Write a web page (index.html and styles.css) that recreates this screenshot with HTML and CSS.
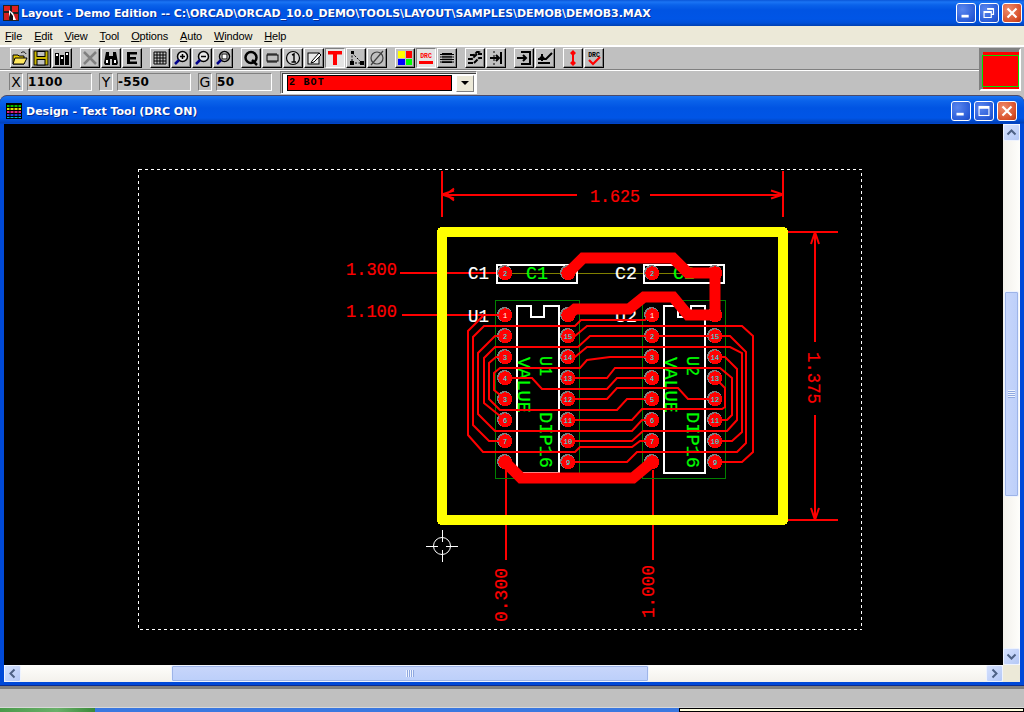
FILE: index.html
```html
<!DOCTYPE html>
<html lang="en">
<head>
<meta charset="utf-8">
<title>Layout - Demo Edition</title>
<link rel="stylesheet" href="styles.css">
</head>
<body>
<div class="app">
  <header class="titlebar">
    <svg class="app-icon" viewBox="0 0 16 16"><rect width="16" height="16" fill="#222"/><path d="M1 1h6v5H1zM9 1h6v6H9z" fill="#e02020"/><path d="M1 8h5v7H1zM11 9h4v6h-4z" fill="#d02020"/><path d="M6 5l4 3 3 7H8L6 9z" fill="#fff"/><path d="M7 7l3 4v4H7z" fill="#111"/></svg>
    <span class="title-text">Layout - Demo Edition -- C:\ORCAD\ORCAD_10.0_DEMO\TOOLS\LAYOUT\SAMPLES\DEMOB\DEMOB3.MAX</span>
    <div class="win-btns">
      <button class="win-btn"><svg viewBox="0 0 20 20"><rect x="5" y="12" width="8" height="3" fill="#fff"/></svg></button>
      <button class="win-btn"><svg viewBox="0 0 20 20"><path d="M8 5.500h7v6h-2.500M4.500 8.500h8v6.500h-8z" fill="none" stroke="#fff" stroke-width="1.300"/><path d="M8 4.500h7v2H8zM4.500 8h8v2h-8z" fill="#fff"/></svg></button>
      <button class="win-btn close"><svg viewBox="0 0 20 20"><path d="M5 5l10 10M15 5L5 15" stroke="#fff" stroke-width="2.400"/></svg></button>
    </div>
  </header>
  <nav class="menubar">
    <span><u>F</u>ile</span><span><u>E</u>dit</span><span><u>V</u>iew</span><span><u>T</u>ool</span><span><u>O</u>ptions</span><span><u>A</u>uto</span><span><u>W</u>indow</span><span><u>H</u>elp</span>
  </nav>
  <section class="tools">
    <div class="tool-rows">
      <div class="toolbar">
        <div class="tgroup">
          <button class="tb"><svg viewBox="0 0 16 16"><path d="M1 5h5l1 1h5v8H1z" fill="#e8c800" stroke="#000"/><path d="M3 8h12l-3 6H1z" fill="#ffe860" stroke="#000"/><path d="M9 3c2-2 4-1 5 1" fill="none" stroke="#000"/></svg></button>
          <button class="tb"><svg viewBox="0 0 16 16"><rect x="1" y="1" width="14" height="14" fill="#c8b400" stroke="#000"/><rect x="4" y="1.500" width="8" height="5" fill="#c0c0c0" stroke="#000"/><rect x="4" y="9.500" width="8" height="5.500" fill="#c0c0c0" stroke="#000"/></svg></button>
          <button class="tb"><svg viewBox="0 0 16 16"><path d="M1 3h4v12H1zM6 5h4v10H6zM11 2h4v13h-4z" fill="#000"/><path d="M2 4h2v2H2zM7 7h2v2H7zM12 3h2v2h-2z" fill="#fff"/></svg></button>
        </div>
        <div class="tgroup">
          <button class="tb"><svg viewBox="0 0 16 16"><path d="M2 2l12 12M14 2L2 14" stroke="#808080" stroke-width="2.500"/></svg></button>
          <button class="tb"><svg viewBox="0 0 16 16"><path d="M3 2h3v4h4V2h3l2 11-1 2H9V9H7v6H2l-1-2z" fill="#000"/><path d="M3 10h2v3H3zM11 10h2v3h-2z" fill="#fff"/></svg></button>
          <button class="tb"><svg viewBox="0 0 16 16"><path d="M3 2h10v2.500H6v2.500h6v2.500H6v2h7V14H3z" fill="#000"/></svg></button>
        </div>
        <div class="tgroup">
          <button class="tb"><svg viewBox="0 0 16 16"><path d="M2 2h12v12H2zM2 5h12M2 8h12M2 11h12M5 2v12M8 2v12M11 2v12" fill="none" stroke="#000"/></svg></button>
          <button class="tb"><svg viewBox="0 0 16 16"><circle cx="9.500" cy="6.500" r="5" fill="#e8e8e8" stroke="#000" stroke-width="1.500"/><path d="M6 10l-4 4" stroke="#00008b" stroke-width="2.500"/><path d="M7 6.500h5M9.500 4v5" stroke="#000" stroke-width="1.500"/></svg></button>
          <button class="tb"><svg viewBox="0 0 16 16"><circle cx="9.500" cy="6.500" r="5" fill="#e8e8e8" stroke="#000" stroke-width="1.500"/><path d="M6 10l-4 4" stroke="#00008b" stroke-width="2.500"/><path d="M7 6.500h5" stroke="#000" stroke-width="1.500"/></svg></button>
          <button class="tb"><svg viewBox="0 0 16 16"><circle cx="9.500" cy="6.500" r="5" fill="#e8e8e8" stroke="#000" stroke-width="1.500"/><path d="M6 10l-4 4" stroke="#00008b" stroke-width="2.500"/><rect x="7" y="4" width="5" height="5" fill="#fff" stroke="#000"/></svg></button>
        </div>
        <div class="tgroup">
          <button class="tb"><svg viewBox="0 0 16 16"><circle cx="8" cy="7.500" r="5.500" fill="none" stroke="#000" stroke-width="2.500"/><path d="M9 10l5 5" stroke="#000" stroke-width="2.500"/></svg></button>
          <button class="tb"><svg viewBox="0 0 16 16"><rect x="3" y="5" width="11" height="6" fill="#c0c0c0" stroke="#000"/><path d="M4 3v2M6 3v2M8 3v2M10 3v2M12 3v2M4 11v2M6 11v2M8 11v2M10 11v2M12 11v2" stroke="#000"/></svg></button>
          <button class="tb"><svg viewBox="0 0 16 16"><circle cx="8" cy="8" r="6.500" fill="#d8d8d8" stroke="#000" stroke-width="1.200"/><path d="M7 5l2-1v8M6.500 12h4.500" fill="none" stroke="#000" stroke-width="1.400"/></svg></button>
          <button class="tb"><svg viewBox="0 0 16 16"><rect x="2" y="3" width="11" height="11" fill="#e8e8e8" stroke="#000"/><path d="M6 11l7-8 2 2-7 7-3 1z" fill="#fff" stroke="#000"/></svg></button>
          <button class="tb on"><svg viewBox="0 0 16 16"><path d="M1 1h14v3.500H10V15H6V4.500H1z" fill="#ff0000"/></svg></button>
          <button class="tb"><svg viewBox="0 0 16 16"><path d="M4 2v11h10" fill="none" stroke="#000" stroke-dasharray="2 1.500"/><path d="M4 3l10 10" stroke="#000" stroke-dasharray="2 1.500"/><path d="M2 11h4v4H2zM12 11h4v4h-4zM3 1h3v3H3z" fill="#000"/></svg></button>
          <button class="tb"><svg viewBox="0 0 16 16"><circle cx="8" cy="8" r="6" fill="none" stroke="#404040" stroke-width="1.200"/><path d="M2 15L14 1" stroke="#404040" stroke-width="1.200"/></svg></button>
        </div>
        <div class="tgroup">
          <button class="tb"><svg viewBox="0 0 16 16"><path d="M1 1h7v7H1z" fill="#ffff00"/><path d="M9 1h6v7H9z" fill="#ff0000"/><path d="M1 9h7v6H1z" fill="#0000ff"/><path d="M9 9h6v6H9z" fill="#00ff00"/></svg></button>
          <button class="tb on"><svg viewBox="0 0 16 16"><text x="8" y="7.500" class="drc-mini">DRC</text><rect x="1" y="11" width="14" height="3" fill="#ff0000"/></svg></button>
          <button class="tb"><svg viewBox="0 0 16 16"><rect x="3" y="3" width="10" height="10" fill="#000"/><path d="M1 4.500h14M1 7h14M1 9.500h14M1 12h14" stroke="#000"/><path d="M2 5.700h12M2 8.200h12M2 10.700h12" stroke="#c0c0c0"/></svg></button>
        </div>
        <div class="tgroup">
          <button class="tb"><svg viewBox="0 0 16 16"><path d="M1 9h4l5-5h5M1 13h6l5-5h3M3 5h4l3-3h4" fill="none" stroke="#000" stroke-width="2" stroke-dasharray="5 1"/></svg></button>
          <button class="tb"><svg viewBox="0 0 16 16"><path d="M2 8h9M8 5l3 3-3 3M13 2v12" fill="none" stroke="#000" stroke-width="2"/><path d="M6 1v14" stroke="#000" stroke-dasharray="2 2"/></svg></button>
        </div>
        <div class="tgroup">
          <button class="tb"><svg viewBox="0 0 16 16"><path d="M1 8h9M7 5l3 3-3 3M5 2h9v12H5" fill="none" stroke="#000" stroke-width="2"/></svg></button>
          <button class="tb"><svg viewBox="0 0 16 16"><path d="M1 9h8l6-6M1 13h12M5 4v7M3 7l2 2 2-2" fill="none" stroke="#000" stroke-width="2"/></svg></button>
        </div>
        <div class="tgroup">
          <button class="tb"><svg viewBox="0 0 16 16"><path d="M8 3v10" stroke="#ff0000" stroke-width="2"/><path d="M8 0l3 3-3 3-3-3zM8 10l3 3-3 3-3-3z" fill="#ff0000"/></svg></button>
          <button class="tb"><svg viewBox="0 0 16 16"><text x="8" y="6.500" class="drc-dark">DRC</text><path d="M3 10l4 4 7-7" fill="none" stroke="#ff0000" stroke-width="2.200"/></svg></button>
        </div>
      </div>
      <div class="coords">
        <span class="cell lab">X</span><span class="cell val w-x">1100</span>
        <span class="cell lab sep">Y</span><span class="cell val w-y">-550</span>
        <span class="cell lab sep">G</span><span class="cell val w-g">50</span>
        <div class="combo">
          <span class="combo-val">2 BOT</span>
          <span class="combo-btn"><i class="caret"></i></span>
        </div>
      </div>
    </div>
    <div class="swatch"><div class="swatch-in"></div></div>
  </section>
  <main class="child">
    <div class="child-title">
      <svg class="child-icon" viewBox="0 0 16 16"><rect width="16" height="16" fill="#000"/><path d="M1 2h14v2H1z" fill="#00c000"/><path d="M1 5h14v2H1z" fill="#e0e000"/><path d="M1 8h14v2H1z" fill="#e02080"/><path d="M1 11h14v2H1z" fill="#2040e0"/><path d="M1 14h14v1H1z" fill="#00c0c0"/><path d="M4 1v14M8 1v14M12 1v14" stroke="#000"/></svg>
      <span class="child-text">Design - Text Tool (DRC ON)</span>
      <div class="win-btns">
        <button class="win-btn"><svg viewBox="0 0 20 20"><rect x="5" y="12" width="8" height="3" fill="#fff"/></svg></button>
        <button class="win-btn"><svg viewBox="0 0 20 20"><rect x="4.500" y="5" width="11" height="10" fill="none" stroke="#fff" stroke-width="1.200"/><rect x="4.500" y="5" width="11" height="2.500" fill="#fff"/></svg></button>
        <button class="win-btn close"><svg viewBox="0 0 20 20"><path d="M5 5l10 10M15 5L5 15" stroke="#fff" stroke-width="2.400"/></svg></button>
      </div>
    </div>
    <div class="child-body">
      <div class="view-row">
        <svg class="canvas" viewBox="4 124 999 541" shape-rendering="crispEdges">
          <defs>
            <g id="pad"><circle cx="-0.400" cy="-0.400" r="7.500" class="pad-edge"/><circle cx="0.300" cy="0.300" r="7" class="pad-fill"/></g>
          </defs>
          <rect x="138.500" y="169.500" width="723" height="460" class="outline"/>

          <g class="ref">
            <path d="M442 171v46M783 171v46M442 194.500h135M650 194.500h133M788 232h50M788 520h50M815 232v110M815 415v105M400 273h105M402 315h103M505.500 470v90M652.500 470v90"/>
            <path d="M442 194.500l12-4M442 194.500l12 4M446 194.500l8-6M446 194.500l8 6M783 194.500l-12-4M783 194.500l-12 4M815 232l-4 12M815 232l4 12M815 520l-4-12M815 520l4-12" shape-rendering="auto"/>
          </g>
          <text class="ref-t" x="590" y="202" textLength="50" lengthAdjust="spacingAndGlyphs">1.625</text>
          <text class="ref-t" x="346" y="275" textLength="51" lengthAdjust="spacingAndGlyphs">1.300</text>
          <text class="ref-t" x="346" y="317" textLength="51" lengthAdjust="spacingAndGlyphs">1.100</text>
          <text class="ref-t" transform="translate(808 352) rotate(90)" textLength="52" lengthAdjust="spacingAndGlyphs">1.375</text>
          <text class="ref-t" transform="translate(507 622) rotate(-90)" textLength="54" lengthAdjust="spacingAndGlyphs">0.300</text>
          <text class="ref-t" transform="translate(654 618) rotate(-90)" textLength="53" lengthAdjust="spacingAndGlyphs">1.000</text>

          <rect x="442" y="232" width="341" height="288" class="frame"/>

          <path class="olive" d="M505 273.500h210"/>
          <path class="court" d="M495.500 300.500h84v178h-84zM642.500 300.500h83v178h-83z"/>
          <path class="silk" d="M496.500 264.500h80v18h-80zM643.500 264.500h80v18h-80zM516.500 305.500h14v11h13v-11h15v167h-42zM663.500 305.500h14v11h13v-11h14v167h-41z"/>

          <text class="w-t" x="468" y="279" textLength="21" lengthAdjust="spacingAndGlyphs">C1</text>
          <text class="w-t" x="615" y="279" textLength="22" lengthAdjust="spacingAndGlyphs">C2</text>
          <text class="w-t" x="468" y="322" textLength="21" lengthAdjust="spacingAndGlyphs">U1</text>
          <text class="w-t" x="615" y="322" textLength="22" lengthAdjust="spacingAndGlyphs">U2</text>
          <text class="g-t" x="526" y="279" textLength="22" lengthAdjust="spacingAndGlyphs">C1</text>
          <text class="g-t" x="673" y="279" textLength="22" lengthAdjust="spacingAndGlyphs">C2</text>
          <text class="g-t" transform="translate(540 356) rotate(90)" textLength="20" lengthAdjust="spacingAndGlyphs">U1</text>
          <text class="g-t" transform="translate(518 357) rotate(90)" textLength="56" lengthAdjust="spacingAndGlyphs">VALUE</text>
          <text class="g-t" transform="translate(540 412) rotate(90)" textLength="56" lengthAdjust="spacingAndGlyphs">DIP16</text>
          <text class="g-t" transform="translate(687 356) rotate(90)" textLength="20" lengthAdjust="spacingAndGlyphs">U2</text>
          <text class="g-t" transform="translate(665 357) rotate(90)" textLength="56" lengthAdjust="spacingAndGlyphs">VALUE</text>
          <text class="g-t" transform="translate(687 412) rotate(90)" textLength="56" lengthAdjust="spacingAndGlyphs">DIP16</text>

          <g>
            <use href="#pad" x="505" y="273"/><use href="#pad" x="568" y="273"/><use href="#pad" x="652" y="273"/><use href="#pad" x="715" y="273"/>
            <use href="#pad" x="505" y="315"/><use href="#pad" x="505" y="336"/><use href="#pad" x="505" y="357"/><use href="#pad" x="505" y="378"/><use href="#pad" x="505" y="399"/><use href="#pad" x="505" y="420"/><use href="#pad" x="505" y="441"/><use href="#pad" x="505" y="462"/>
            <use href="#pad" x="568" y="315"/><use href="#pad" x="568" y="336"/><use href="#pad" x="568" y="357"/><use href="#pad" x="568" y="378"/><use href="#pad" x="568" y="399"/><use href="#pad" x="568" y="420"/><use href="#pad" x="568" y="441"/><use href="#pad" x="568" y="462"/>
            <use href="#pad" x="652" y="315"/><use href="#pad" x="652" y="336"/><use href="#pad" x="652" y="357"/><use href="#pad" x="652" y="378"/><use href="#pad" x="652" y="399"/><use href="#pad" x="652" y="420"/><use href="#pad" x="652" y="441"/><use href="#pad" x="652" y="462"/>
            <use href="#pad" x="715" y="315"/><use href="#pad" x="715" y="336"/><use href="#pad" x="715" y="357"/><use href="#pad" x="715" y="378"/><use href="#pad" x="715" y="399"/><use href="#pad" x="715" y="420"/><use href="#pad" x="715" y="441"/><use href="#pad" x="715" y="462"/>
          </g>

          <g class="thin" shape-rendering="auto">
            <path d="M505 315h-21l-16 16v104l15 17h92l5-5h52l8-6h12"/>
            <path d="M652 315l-7 5h-64l-6 6h-91l-11 11v88l16 16h16"/>
            <path d="M568 336h7l12-10h155l11 10v116l-11 10h-27"/>
            <path d="M568 462h59l10-10h100l9-9v-91l-16-16H590l-12 11h-83l-11 11v45l21 17"/>
            <path d="M568 357h7l12-10h143l12 6v79l-10 9h-17"/>
            <path d="M715 357h10l12 12v51l-10 11H643l-11 10h-64"/>
            <path d="M715 420h12l5-5v-37l-12-10H615l-8 10h-39"/>
            <path d="M715 378l10 10v19l-3 2h-80l-10 11h-64"/>
            <path d="M715 399h-27l-10-11h-61l-10 11h-39"/>
            <path d="M652 399h-25l-10 11H500l-11-11v-36l7-6h9"/>
            <path d="M652 378h-35l-10 11h-65l-10-11h-27"/>
            <path d="M652 357h-42l-23 3-7 8H500l-6 5v17l11 9"/>
            <path d="M652 420h-10l-10 11H495l-17-17v-61l17-17h10"/>
          </g>
          <g class="thick" shape-rendering="auto">
            <path d="M568 273l15-15h90l15 15h27v42h-27l-15-18h-29l-15 12h-54l-7 6"/>
            <path d="M505 462l16 16h112l19-16"/>
          </g>

          <g class="pin-n">
            <text class="pin-w" x="505" y="318">1</text><text x="505" y="276">2</text><text x="505" y="339">2</text><text x="505" y="360">3</text><text x="505" y="381">4</text><text x="505" y="402">3</text><text x="505" y="423">6</text><text x="505" y="444">7</text>
            <text x="568" y="339">15</text><text x="568" y="360">14</text><text x="568" y="381">13</text><text x="568" y="402">12</text><text x="568" y="423">11</text><text x="568" y="444">10</text><text x="568" y="465">9</text>
            <text x="652" y="339">2</text><text x="652" y="360">3</text><text x="652" y="381">4</text><text x="652" y="402">5</text><text x="652" y="423">6</text><text x="652" y="444">7</text>
            <text x="715" y="339">15</text><text x="715" y="360">14</text><text x="715" y="381">13</text><text x="715" y="402">12</text><text x="715" y="423">11</text><text x="715" y="444">10</text><text x="715" y="465">9</text>
            <text class="pin-w" x="652" y="318">1</text><text x="652" y="276">2</text>
          </g>

          <g class="cross">
            <circle cx="442" cy="546" r="8.500" shape-rendering="auto"/>
            <path d="M442 530v12M442 550v12M426 546h12M446 546h12"/>
          </g>
        </svg>
        <div class="vscroll">
          <span class="sb-btn"><svg viewBox="0 0 15 15"><path d="M3.500 9.500l4-4 4 4" fill="none" stroke="#4d6185" stroke-width="2"/></svg></span>
          <div class="vtrack"><div class="vthumb"><i class="grip"></i></div></div>
          <span class="sb-btn"><svg viewBox="0 0 15 15"><path d="M3.500 5.500l4 4 4-4" fill="none" stroke="#4d6185" stroke-width="2"/></svg></span>
        </div>
      </div>
      <div class="hscroll">
        <span class="sb-btn"><svg viewBox="0 0 15 15"><path d="M9.500 3.500l-4 4 4 4" fill="none" stroke="#4d6185" stroke-width="2"/></svg></span>
        <div class="htrack"><div class="hthumb"><i class="grip-h"></i></div></div>
        <span class="sb-btn"><svg viewBox="0 0 15 15"><path d="M5.500 3.500l4 4-4 4" fill="none" stroke="#4d6185" stroke-width="2"/></svg></span>
        <span class="sizer"></span>
      </div>
    </div>
  </main>
  <div class="status"></div>
  <footer class="taskstrip"><span class="start"></span><span class="task"></span><span class="tip"></span></footer>
</div>
</body>
</html>
```

FILE: styles.css
```css
* { box-sizing: border-box; }
html, body { margin: 0; padding: 0; background: #c0c0c0; }
.app { width: 1024px; height: 712px; overflow: hidden; display: flex; flex-direction: column; font-family: "DejaVu Sans", sans-serif; }

.titlebar { height: 26px; flex: none; display: flex; align-items: center; padding: 0 2px 0 3px; background: linear-gradient(#0a56d8 0, #1a74f4 2px, #0a62ea 5px, #0054e3 10px, #0055e6 19px, #0050d8 23px, #0040b0 26px); }
.app-icon { width: 16px; height: 16px; flex: none; }
.title-text { margin-left: 2px; color: #fff; font-size: 11px; font-weight: bold; white-space: nowrap; text-shadow: 1px 1px 0 #0a2c90; flex: 1; letter-spacing: -0.05px; }
.win-btns { display: flex; gap: 3px; flex: none; }
.win-btn { width: 20px; height: 20px; padding: 0; border: 1px solid #fff; border-radius: 3px; background: radial-gradient(circle at 30% 30%, #5a86ee, #2a5cd8 70%, #1c48c0); display: block; }
.win-btn svg { width: 18px; height: 18px; display: block; }
.win-btn.close { background: radial-gradient(circle at 30% 30%, #ee8a6a, #d8502a 70%, #b83410); }

.menubar { height: 19px; flex: none; background: #ece9d8; display: flex; gap: 12px; padding-left: 5px; align-items: center; font: 11px "Liberation Sans", sans-serif; letter-spacing: -0.15px; color: #000; }

.tools { height: 50px; flex: none; background: #c0c0c0; border-top: 2px solid #fff; display: flex; }
.tool-rows { flex: 1; display: flex; flex-direction: column; }
.toolbar { height: 23px; padding: 1px 0 0 10px; display: flex; gap: 8px; border-bottom: 1px solid #808080; box-shadow: 0 1px 0 #fff; }
.tgroup { display: flex; gap: 1px; }
.tb { width: 20px; height: 20px; padding: 1px; background: #c0c0c0; border: 1px solid; border-color: #fff #000 #000 #fff; box-shadow: inset -1px -1px 0 #808080; display: block; }
.tb svg { width: 16px; height: 16px; display: block; }
.tb.on { background: #e4e4e4; border-color: #808080 #fff #fff #808080; box-shadow: none; }
.drc-mini { font: bold 6.500px "Liberation Mono", monospace; fill: #ff0000; text-anchor: middle; }
.drc-dark { font: bold 6.500px "Liberation Mono", monospace; fill: #000; text-anchor: middle; }

.coords { height: 25px; margin-top: 1px; padding: 2px 0 0 9px; display: flex; align-items: flex-start; }
.cell { height: 18px; border: 1px solid; border-color: #808080 #fff #fff #808080; display: flex; align-items: center; color: #000; }
.lab { width: 14px; justify-content: center; font-size: 14px; line-height: 1; }
.sep { margin-left: 7px; }
.val { margin-left: 4px; padding-left: 0; font-size: 12px; font-weight: bold; letter-spacing: 0.3px; }
.w-x { width: 65px; }
.w-y { width: 74px; }
.w-g { width: 56px; }
.combo { width: 197px; height: 23px; margin: -2px 0 0 8px; padding: 3px 2px 2px 6px; background: #fff; border: 1px solid; border-color: #808080 #fff #fff #808080; display: flex; gap: 4px; box-shadow: inset 1px 1px 0 #c0c0c0, inset 2px 2px 0 #404040; }
.combo-val { width: 167px; height: 16px; background: #ff0000; border: 1px solid #000; font: bold 10px/13px "Liberation Mono", monospace; letter-spacing: 1.200px; padding-left: 1px; color: #000; }
.combo-btn { width: 18px; height: 17px; background: #ece9d8; border: 1px solid; border-color: #fff #808080 #808080 #fff; display: flex; align-items: center; justify-content: center; }
.caret { width: 0; height: 0; border: 4px solid transparent; border-top: 4px solid #000; border-bottom: 0; display: block; }

.swatch { width: 42px; height: 43px; margin: 1px 3px 0 0; border: 2px solid; border-color: #808080 #fff #fff #808080; box-shadow: inset 2px 2px 0 #808080; background: #ff0000; padding: 5px 0 2px 1px; flex: none; align-self: flex-start; }
.swatch-in { height: 100%; background: #ff0000; border: 1px solid #00e000; }

.child { height: 591px; flex: none; border-radius: 7px 7px 0 0; padding: 0 4px 4px; display: flex; flex-direction: column; border-top: 1px solid #4a4a6a; box-shadow: inset 0 -1px 0 #0a2c90; background: #0049d8 linear-gradient(#1a74f4 0, #0a62ea 5px, #0054e3 12px, #0055e6 22px, #0040b8 27px, #0049d8 28px); background-repeat: no-repeat; }
.child-title { height: 28px; display: flex; align-items: center; padding: 2px 3px 0 2px; flex: none; }
.child-icon { width: 16px; height: 16px; flex: none; }
.child-text { margin-left: 4px; color: #fff; font-size: 11px; font-weight: bold; flex: 1; white-space: nowrap; text-shadow: 1px 1px 0 #0a2c90; }
.child-body { flex: 1; display: flex; flex-direction: column; min-height: 0; }
.view-row { height: 541px; display: flex; flex: none; }
.canvas { width: 999px; height: 541px; background: #000; display: block; flex: none; }

.vscroll { width: 17px; display: flex; flex-direction: column; background: linear-gradient(90deg, #f3f1ec, #fefefb); }
.vtrack { flex: 1; padding-top: 150px; }
.vthumb { height: 206px; margin: 0 1px; border: 1px solid #eef3fe; border-radius: 2px; background: linear-gradient(90deg, #c8d6fb, #bccffa); display: flex; align-items: center; justify-content: center; box-shadow: 0 0 0 1px #9db4e8 inset; }
.grip { width: 7px; height: 8px; display: block; background: repeating-linear-gradient(#eef3fe 0 1px, #8fa8e0 1px 2px); }
.sb-btn { width: 17px; height: 17px; display: block; flex: none; background: linear-gradient(135deg, #d5e1fe, #b4c8f6); border: 1px solid #eef3fe; border-radius: 2px; }
.sb-btn svg { width: 15px; height: 15px; display: block; }
.hscroll { height: 17px; display: flex; flex: none; background: linear-gradient(#fefefb, #f3f1ec); }
.htrack { flex: 1; padding-left: 150px; }
.hthumb { width: 478px; height: 17px; border: 1px solid #eef3fe; border-radius: 2px; background: linear-gradient(#c8d6fb, #bccffa); display: flex; align-items: center; justify-content: center; box-shadow: 0 0 0 1px #9db4e8 inset; }
.grip-h { width: 8px; height: 7px; display: block; background: repeating-linear-gradient(90deg, #eef3fe 0 1px, #8fa8e0 1px 2px); }
.sizer { width: 17px; height: 17px; flex: none; background: #ece9d8; }

.status { height: 21px; flex: none; background: #c0c0c0; border-top: 3px solid #808080; }
.taskstrip { height: 5px; display: flex; flex: none; border-top: 1px solid #d8d8d8; }
.start { width: 95px; background: linear-gradient(90deg, #4a9a4a, #6ab06a 60%, #3a8a3a); }
.task { width: 584px; background: #3a78e0; }
.tip { flex: 1; background: #ffffe1; border: 1px solid #000; }

.outline { fill: none; stroke: #fff; stroke-dasharray: 3 3; }
.frame { fill: none; stroke: #ffff00; stroke-width: 10; stroke-linejoin: round; }
.ref path { fill: none; stroke: #ff0000; stroke-width: 2; }
.ref-t { fill: #ff0000; font: 18px "Liberation Mono", monospace; stroke: #ff0000; stroke-width: 0.200; }
.w-t { fill: #fff; font: 18px "Liberation Mono", monospace; stroke: #fff; stroke-width: 0.200; }
.g-t { fill: #00ff00; font: 18px "Liberation Mono", monospace; stroke: #00ff00; stroke-width: 0.200; }
.olive { fill: none; stroke: #808000; stroke-width: 1; }
.court { fill: none; stroke: #008000; stroke-width: 1; }
.silk { fill: none; stroke: #fff; stroke-width: 2; }
.pad-edge { fill: #808080; }
.pad-fill { fill: #ff0000; }
.thin path { fill: none; stroke: #ff0000; stroke-width: 2; }
.thick path { fill: none; stroke: #ff0000; stroke-width: 11; stroke-linecap: round; stroke-linejoin: miter; }
.pin-n text { fill: #00ffff; font: 7px "Liberation Mono", monospace; text-anchor: middle; }
.pin-n .pin-w { fill: #fff; }
.cross { fill: none; stroke: #fff; stroke-width: 1; }
```
